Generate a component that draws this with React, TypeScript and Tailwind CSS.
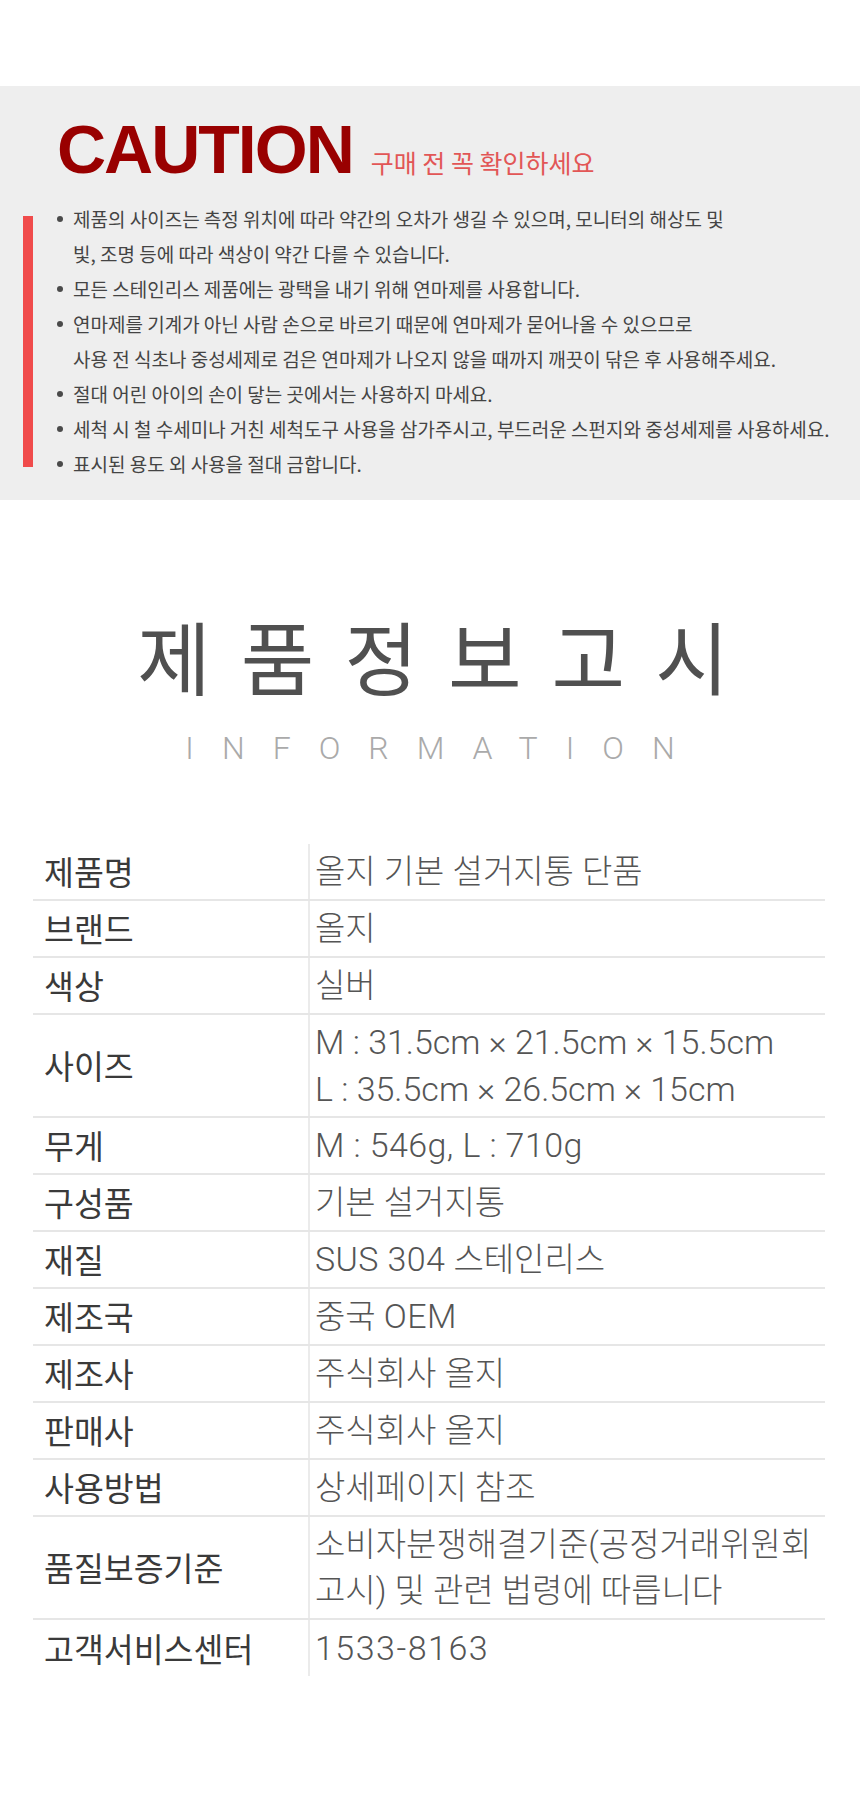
import type { ReactNode } from 'react'

const bullets: string[][] = [
  ['제품의 사이즈는 측정 위치에 따라 약간의 오차가 생길 수 있으며, 모니터의 해상도 및', '빛, 조명 등에 따라 색상이 약간 다를 수 있습니다.'],
  ['모든 스테인리스 제품에는 광택을 내기 위해 연마제를 사용합니다.'],
  ['연마제를 기계가 아닌 사람 손으로 바르기 때문에 연마제가 묻어나올 수 있으므로', '사용 전 식초나 중성세제로 검은 연마제가 나오지 않을 때까지 깨끗이 닦은 후 사용해주세요.'],
  ['절대 어린 아이의 손이 닿는 곳에서는 사용하지 마세요.'],
  ['세척 시 철 수세미나 거친 세척도구 사용을 삼가주시고, 부드러운 스펀지와 중성세제를 사용하세요.'],
  ['표시된 용도 외 사용을 절대 금합니다.'],
]

// latin runs in the value column are set a touch larger than the hangul
function En({ children, track = 'none' }: { children: ReactNode; track?: 'none' | 'sm' | 'wide' }) {
  const t = { none: '', sm: 'tracking-[0.4px]', wide: 'tracking-[1.5px]' }[track]
  return <span className={`text-[34px] ${t}`}>{children}</span>
}

interface Row {
  label: string
  value: ReactNode
  tall?: boolean
}

const rows: Row[] = [
  { label: '제품명', value: '올지 기본 설거지통 단품' },
  { label: '브랜드', value: '올지' },
  { label: '색상', value: '실버' },
  {
    label: '사이즈',
    tall: true,
    value: (
      <>
        <En>M : 31.5cm × 21.5cm × 15.5cm</En>
        <br />
        <En>L : 35.5cm × 26.5cm × 15cm</En>
      </>
    ),
  },
  { label: '무게', value: <En track="sm">M : 546g, L : 710g</En> },
  { label: '구성품', value: '기본 설거지통' },
  { label: '재질', value: <><En track="sm">SUS 304</En> 스테인리스</> },
  { label: '제조국', value: <>중국 <En track="sm">OEM</En></> },
  { label: '제조사', value: '주식회사 올지' },
  { label: '판매사', value: '주식회사 올지' },
  { label: '사용방법', value: '상세페이지 참조' },
  {
    label: '품질보증기준',
    tall: true,
    value: (
      <>
        소비자분쟁해결기준(공정거래위원회
        <br />
        고시) 및 관련 법령에 따릅니다
      </>
    ),
  },
  { label: '고객서비스센터', value: <En track="wide">1533-8163</En> },
]

export default function App() {
  return (
    <div className="w-[860px] min-h-[1800px] bg-white font-['Noto_Sans_CJK_KR',sans-serif]">
      <div className="h-[86px]" />

      {/* Caution */}
      <section className="h-[414px] bg-[#eeeeee] pt-[28px]">
        <div className="flex items-baseline pl-[57px]">
          <span className="font-['Liberation_Sans',Arial,sans-serif] text-[68px] leading-[70px] font-bold tracking-[-2px] text-[#990000]">
            CAUTION
          </span>
          <span className="ml-[18px] text-[25px] text-[#e25656]">구매 전 꼭 확인하세요</span>
        </div>

        <div className="mt-[17px] flex pl-[23px]">
          <div className="mt-[15px] mb-[14px] w-[10px] shrink-0 bg-[#f04b4b]" />
          <ul className="ml-[24px] text-[19px] leading-[35px] text-[#444444]">
            {bullets.map((lines, i) => (
              <li key={i} className="flex">
                <span className="flex h-[35px] w-[16px] shrink-0 items-center">
                  <span className="h-[6px] w-[6px] rounded-full bg-[#4a4a4a]" />
                </span>
                <span className="whitespace-nowrap">
                  {lines.map((l, j) => (
                    <span key={j} className="block">{l}</span>
                  ))}
                </span>
              </li>
            ))}
          </ul>
        </div>
      </section>

      {/* Title */}
      <h2 className="mt-[114px] pl-[36px] text-center text-[80px] leading-[80px] font-normal tracking-[30px] text-[#505050]">
        제품정보고시
      </h2>
      <p className="mt-[38px] pl-[28px] text-center font-['Roboto',sans-serif] text-[32px] leading-[32px] font-light tracking-[28px] text-[#aaaaaa]">
        INFORMATION
      </p>

      {/* Table */}
      <div className="mt-[80px] ml-[33px] w-[792px]">
        {rows.map((r, i) => {
          const last = i === rows.length - 1
          return (
            <div
              key={r.label}
              className={`flex ${r.tall ? 'h-[103px]' : last ? 'h-[56px]' : 'h-[57px]'} ${last ? '' : 'border-b-2 border-[#e6e6e6]'}`}
            >
              <div className="flex w-[277px] shrink-0 items-center border-r-2 border-[#ebebeb] pl-[11px] text-[32.5px] font-normal text-[#3a3a3a]">
                {r.label}
              </div>
              <div className="flex flex-1 items-center whitespace-nowrap pl-[5px] font-['Roboto','Noto_Sans_CJK_KR',sans-serif] text-[33px] leading-[46px] font-light text-[#555555]">
                <div>{r.value}</div>
              </div>
            </div>
          )
        })}
      </div>
    </div>
  )
}
